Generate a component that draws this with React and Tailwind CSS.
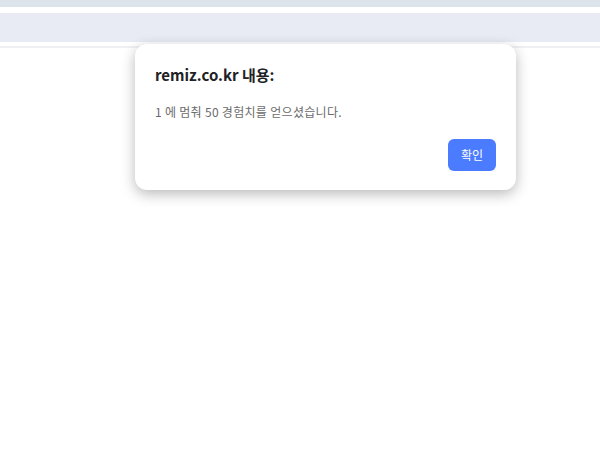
export default function App() {
  return (
    <div
      className="relative w-[600px] h-[471px] overflow-hidden bg-white"
      style={{ fontFamily: '"Noto Sans CJK KR", "Noto Sans", sans-serif' }}
    >
      {/* page behind the dialog */}
      <div className="h-[7px] bg-[#dce3ea]" />
      <div className="h-[6px] bg-white" />
      <div className="h-[29px] bg-[#e8ebf4]" />
      <div className="h-[4px] bg-white" />
      <div className="h-[2px] bg-[#eef0f4]" />

      {/* alert dialog */}
      <div className="absolute left-[135px] top-[44px] w-[381px] h-[146px] bg-white rounded-xl shadow-[0_4px_14px_rgba(0,0,0,0.28)] px-[20px] pt-[20px]">
        <h1 className="text-[15px] font-bold text-[#202124] leading-[22px]">
          remiz.co.kr 내용:
        </h1>
        <p className="mt-[18px] text-[12px] tracking-[0.3px] text-[#6b6b6b] leading-[16px]">
          1 에 멈춰 50 경험치를 얻으셨습니다.
        </p>
        <div className="mt-[19px] flex justify-end">
          <button className="w-[48px] h-[32px] rounded-md bg-[#4b7bff] text-white text-[12px]">
            확인
          </button>
        </div>
      </div>
    </div>
  );
}
